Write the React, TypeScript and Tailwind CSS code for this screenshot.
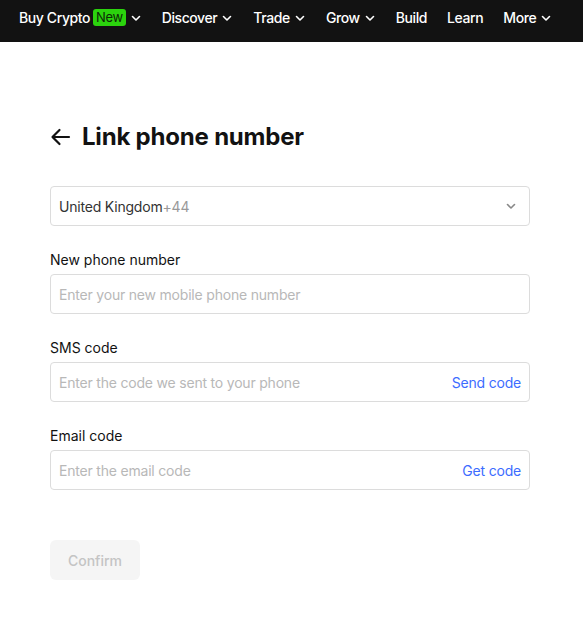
import React from "react";

const Chev = ({ className = "" }: { className?: string }) => (
  <svg width="12" height="12" viewBox="0 0 12 12" className={className} fill="none">
    <path d="M2.5 4.5L6 8L9.5 4.5" stroke="currentColor" strokeWidth="1.6" strokeLinecap="round" strokeLinejoin="round" />
  </svg>
);

function NavItem({ label, chevron = true }: { label: string; chevron?: boolean }) {
  return (
    <div className="flex items-center gap-[4px] text-white whitespace-nowrap">
      <span>{label}</span>
      {chevron && <Chev />}
    </div>
  );
}

function Field({ label, placeholder, action }: { label: string; placeholder: string; action?: string }) {
  return (
    <div className="flex flex-col">
      <div className="text-[14px] leading-[20px] text-[#121212] mb-[4px]">{label}</div>
      <div className="h-[40px] rounded-[4px] border border-[#dcdcdc] flex items-center px-[8px] justify-between">
        <span className="text-[14px] text-[#b8b8b8] tracking-[-0.2px]">{placeholder}</span>
        {action && <span className="text-[14px] text-[#3d6cff] tracking-[-0.2px]">{action}</span>}
      </div>
    </div>
  );
}

export default function App() {
  return (
    <div className="w-[583px] h-[634px] bg-white" style={{ fontFamily: "Inter, 'Noto Sans', sans-serif" }}>
      <div className="h-[42px] bg-[#121212] flex items-center pl-[19px] gap-[20px] text-[14px] font-medium tracking-[-0.4px] pb-[7px] whitespace-nowrap overflow-hidden">
        <div className="flex items-center gap-[4px] text-white">
          <span>Buy Crypto</span>
          <span className="bg-[#2bd30d] text-[#0b2a06] text-[13px] font-normal leading-[17px] px-[3px] rounded-[3px] -ml-[1px]">New</span>
          <Chev />
        </div>
        <NavItem label="Discover" />
        <NavItem label="Trade" />
        <NavItem label="Grow" />
        <NavItem label="Build" chevron={false} />
        <NavItem label="Learn" chevron={false} />
        <NavItem label="More" />
      </div>

      <div className="px-[50px] pt-[78px]">
        <div className="flex items-center gap-[11px] h-[34px]">
          <svg width="21" height="18" viewBox="0 0 21 18" fill="none" className="text-[#121212]">
            <path d="M19 9H3M9.5 2L2.5 9L9.5 16" stroke="currentColor" strokeWidth="2.2" strokeLinecap="round" strokeLinejoin="round" />
          </svg>
          <h1 className="text-[24px] font-bold text-[#121212] tracking-[-0.2px]">Link phone number</h1>
        </div>

        <div className="mt-[32px] w-[480px] flex flex-col gap-[24px]">
          <div className="h-[40px] rounded-[4px] border border-[#dcdcdc] flex items-center justify-between pl-[8px] pr-[12px]">
            <span className="text-[14px] text-[#333] tracking-[-0.2px]">
              United Kingdom<span className="text-[#999]">+44</span>
            </span>
            <Chev className="text-[#888]" />
          </div>
          <Field label="New phone number" placeholder="Enter your new mobile phone number" />
          <Field label="SMS code" placeholder="Enter the code we sent to your phone" action="Send code" />
          <Field label="Email code" placeholder="Enter the email code" action="Get code" />
        </div>

        <button className="mt-[50px] h-[40px] w-[90px] rounded-[6px] bg-[#f5f5f5] text-[#c4c4c4] text-[14px] font-medium">
          Confirm
        </button>
      </div>
    </div>
  );
}
